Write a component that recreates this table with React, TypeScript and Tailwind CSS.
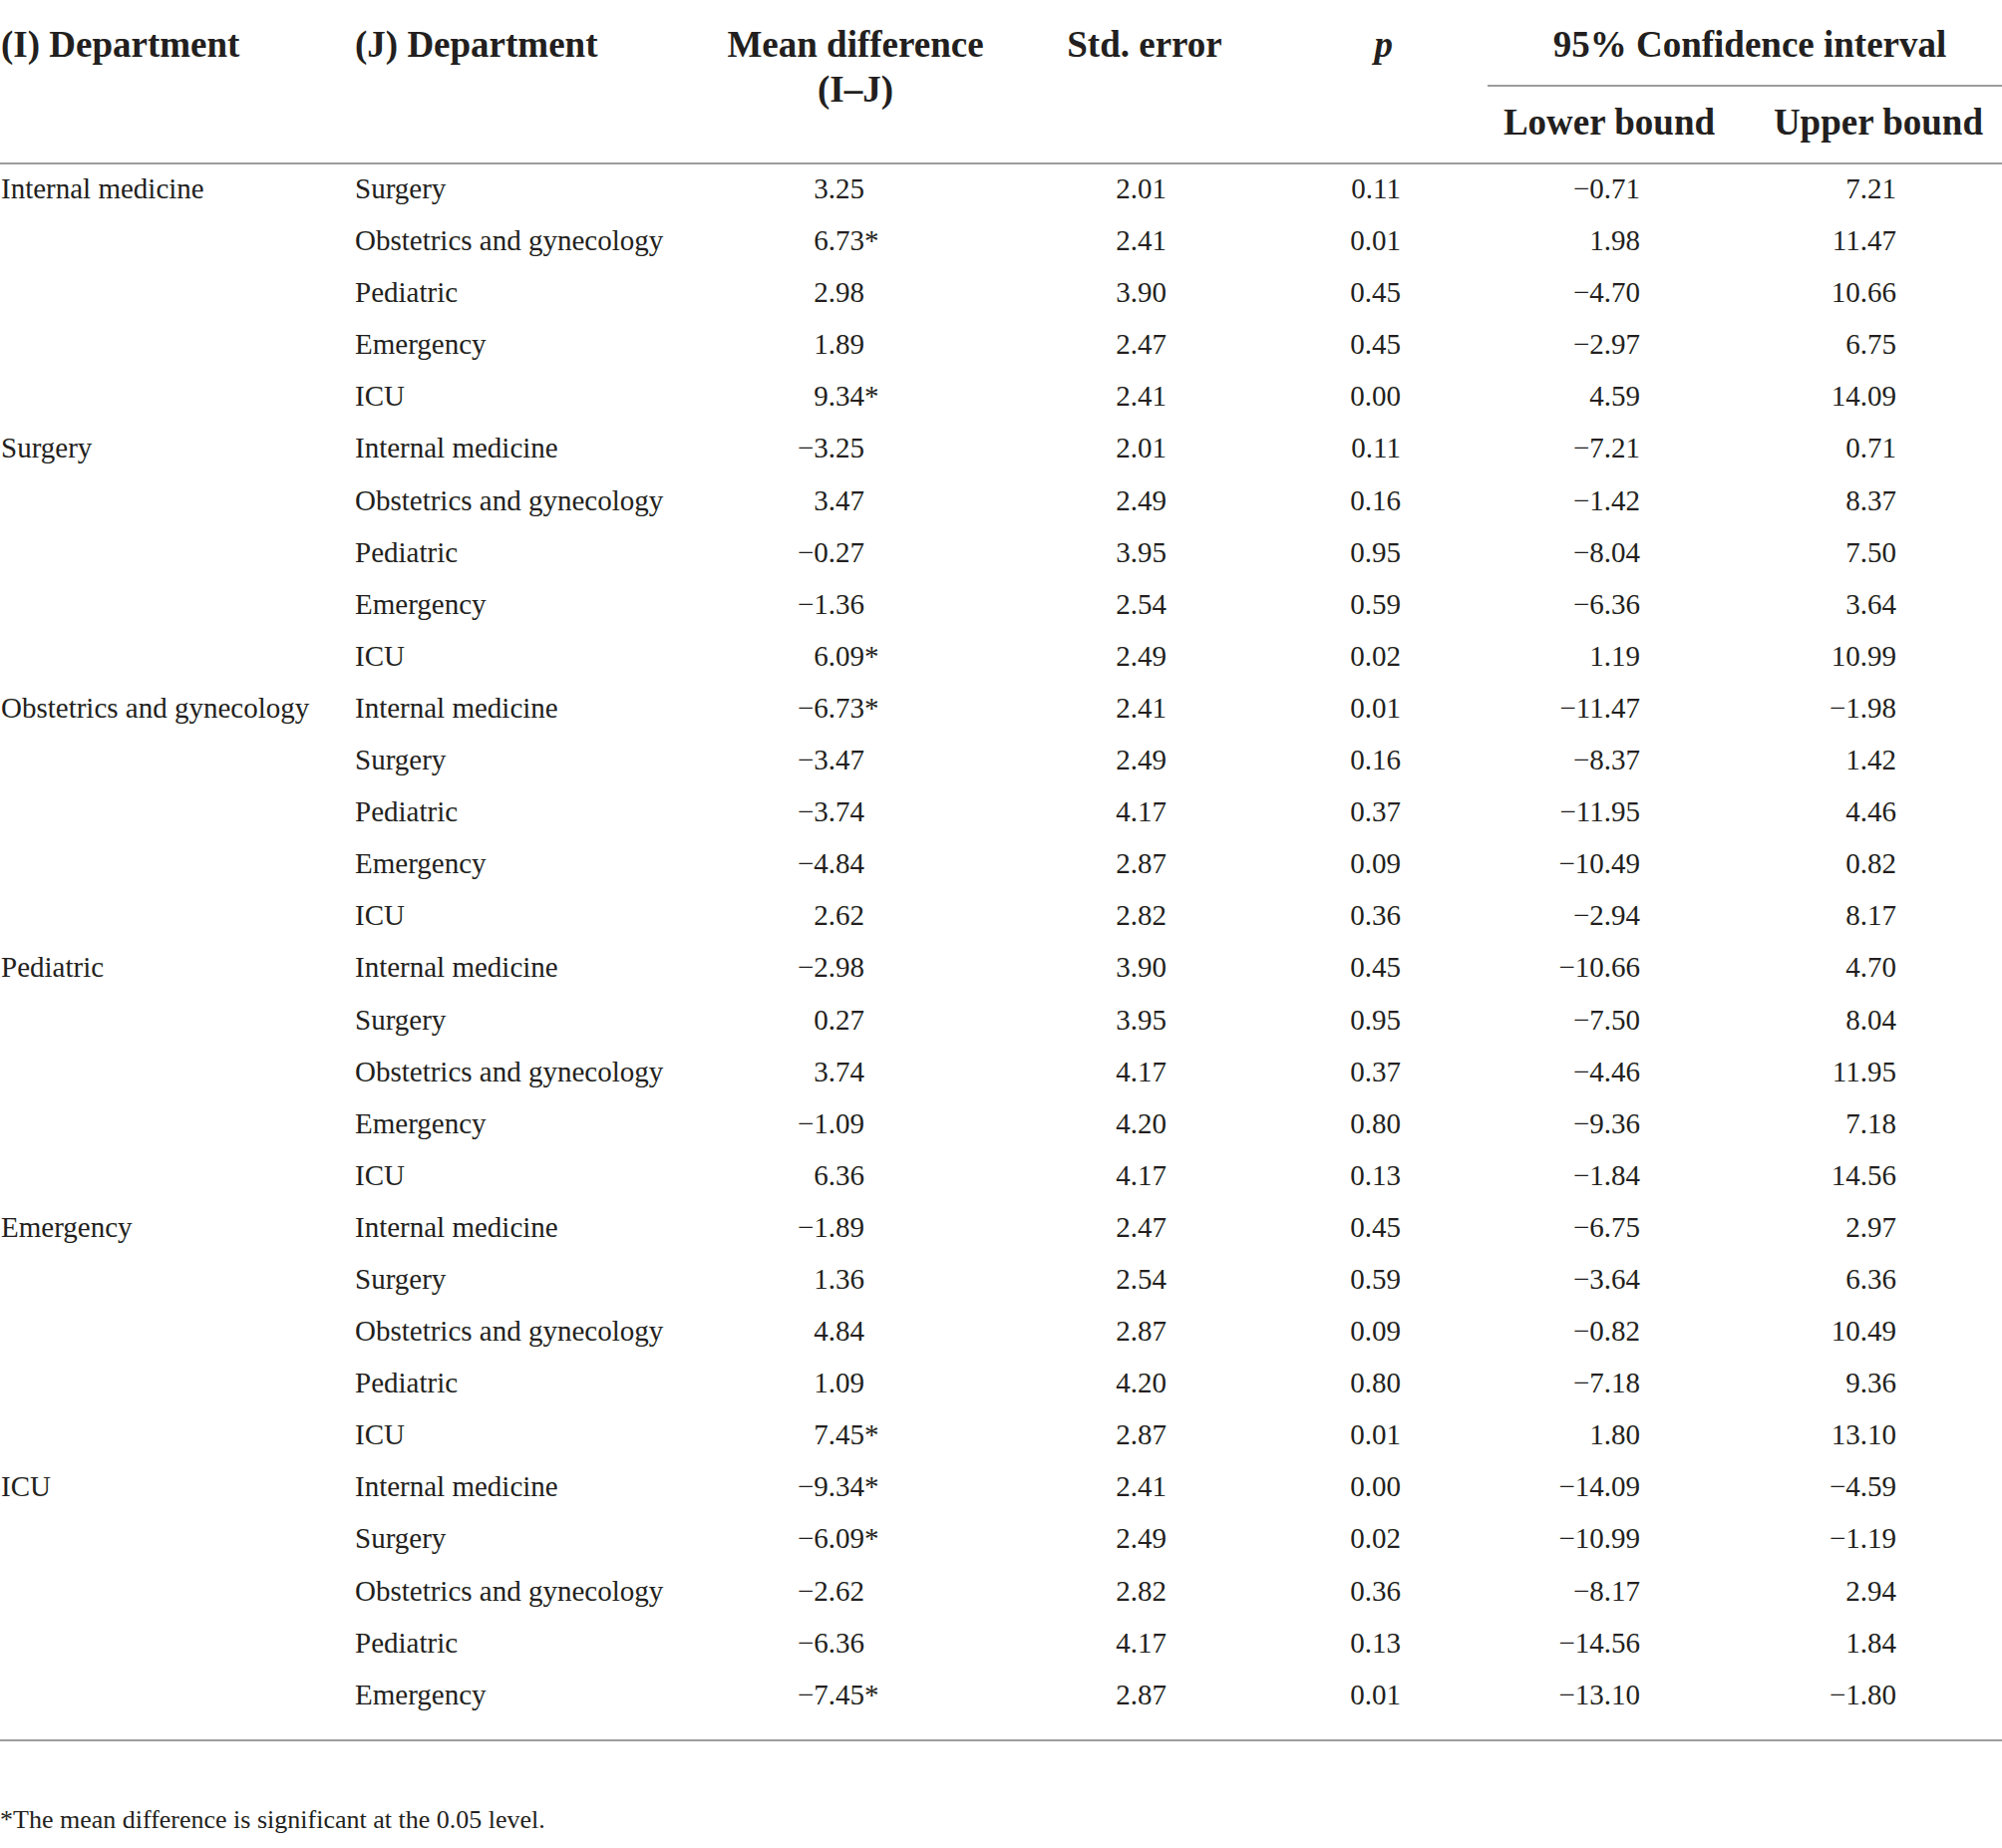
import React from "react";

type Row = [string, string, string, string, string, string];

const groups: { name: string; rows: Row[] }[] = [
  {
    name: "Internal medicine",
    rows: [
      ["Surgery", "3.25", "2.01", "0.11", "−0.71", "7.21"],
      ["Obstetrics and gynecology", "6.73*", "2.41", "0.01", "1.98", "11.47"],
      ["Pediatric", "2.98", "3.90", "0.45", "−4.70", "10.66"],
      ["Emergency", "1.89", "2.47", "0.45", "−2.97", "6.75"],
      ["ICU", "9.34*", "2.41", "0.00", "4.59", "14.09"],
    ],
  },
  {
    name: "Surgery",
    rows: [
      ["Internal medicine", "−3.25", "2.01", "0.11", "−7.21", "0.71"],
      ["Obstetrics and gynecology", "3.47", "2.49", "0.16", "−1.42", "8.37"],
      ["Pediatric", "−0.27", "3.95", "0.95", "−8.04", "7.50"],
      ["Emergency", "−1.36", "2.54", "0.59", "−6.36", "3.64"],
      ["ICU", "6.09*", "2.49", "0.02", "1.19", "10.99"],
    ],
  },
  {
    name: "Obstetrics and gynecology",
    rows: [
      ["Internal medicine", "−6.73*", "2.41", "0.01", "−11.47", "−1.98"],
      ["Surgery", "−3.47", "2.49", "0.16", "−8.37", "1.42"],
      ["Pediatric", "−3.74", "4.17", "0.37", "−11.95", "4.46"],
      ["Emergency", "−4.84", "2.87", "0.09", "−10.49", "0.82"],
      ["ICU", "2.62", "2.82", "0.36", "−2.94", "8.17"],
    ],
  },
  {
    name: "Pediatric",
    rows: [
      ["Internal medicine", "−2.98", "3.90", "0.45", "−10.66", "4.70"],
      ["Surgery", "0.27", "3.95", "0.95", "−7.50", "8.04"],
      ["Obstetrics and gynecology", "3.74", "4.17", "0.37", "−4.46", "11.95"],
      ["Emergency", "−1.09", "4.20", "0.80", "−9.36", "7.18"],
      ["ICU", "6.36", "4.17", "0.13", "−1.84", "14.56"],
    ],
  },
  {
    name: "Emergency",
    rows: [
      ["Internal medicine", "−1.89", "2.47", "0.45", "−6.75", "2.97"],
      ["Surgery", "1.36", "2.54", "0.59", "−3.64", "6.36"],
      ["Obstetrics and gynecology", "4.84", "2.87", "0.09", "−0.82", "10.49"],
      ["Pediatric", "1.09", "4.20", "0.80", "−7.18", "9.36"],
      ["ICU", "7.45*", "2.87", "0.01", "1.80", "13.10"],
    ],
  },
  {
    name: "ICU",
    rows: [
      ["Internal medicine", "−9.34*", "2.41", "0.00", "−14.09", "−4.59"],
      ["Surgery", "−6.09*", "2.49", "0.02", "−10.99", "−1.19"],
      ["Obstetrics and gynecology", "−2.62", "2.82", "0.36", "−8.17", "2.94"],
      ["Pediatric", "−6.36", "4.17", "0.13", "−14.56", "1.84"],
      ["Emergency", "−7.45*", "2.87", "0.01", "−13.10", "−1.80"],
    ],
  },
];

const cols = "grid grid-cols-[355px_400px_206px_374px_157px_244px_272px]";

function Mean({ v }: { v: string }) {
  const star = v.endsWith("*");
  const num = star ? v.slice(0, -1) : v;
  return (
    <div className="text-right pr-[80px]">
      {num}
      <span className="inline-block w-[14px] text-left">{star ? "*" : ""}</span>
    </div>
  );
}

export default function App() {
  return (
    <div
      className="w-[2008px] min-h-[1854px] bg-white text-[#231f20]"
      style={{ fontFamily: '"Liberation Serif", "Times New Roman", serif' }}
    >
      {/* Header */}
      <div className={`${cols} grid-rows-[87px_77px] border-b-2 border-[#9c9c9c] text-[37px] leading-[41px] font-bold h-[165px]`}>
        <div className="row-span-2 pt-[24px] pl-[1px] whitespace-nowrap">(I) Department</div>
        <div className="row-span-2 pt-[24px] pl-[1px] whitespace-nowrap">(J) Department</div>
        <div className="row-span-2 pt-[24px] flex flex-col items-center whitespace-nowrap">
          <span>Mean difference</span>
          <span className="mt-[4px]">(I–J)</span>
        </div>
        <div className="row-span-2 pt-[24px] flex justify-center whitespace-nowrap">Std. error</div>
        <div className="row-span-2 pt-[24px] text-right pr-[95px] italic">p</div>
        <div className="col-span-2 pt-[24px] text-center border-b-2 border-[#9c9c9c] pl-[10px] whitespace-nowrap">
          95% Confidence interval
        </div>
        <div className="pt-[15px] text-center whitespace-nowrap">Lower bound</div>
        <div className="pt-[15px] text-right pr-[19px] whitespace-nowrap">Upper bound</div>
      </div>

      {/* Body */}
      <div className="text-[29px] pb-[17px] border-b-2 border-[#9c9c9c]">
        {groups.map((g) =>
          g.rows.map((r, i) => (
            <div key={g.name + r[0]} className={`${cols} h-[52.1px] leading-[48px]`}>
              <div className="pl-[1px] whitespace-nowrap">{i === 0 ? g.name : ""}</div>
              <div className="pl-[1px] whitespace-nowrap">{r[0]}</div>
              <Mean v={r[1]} />
              <div className="text-right pr-[165px]">{r[2]}</div>
              <div className="text-right pr-[87px]">{r[3]}</div>
              <div className="text-right pr-[91px]">{r[4]}</div>
              <div className="text-right pr-[106px]">{r[5]}</div>
            </div>
          ))
        )}
      </div>

      {/* Footnote */}
      <div className="mt-[64px] text-[26px] leading-[29px]">
        *The mean difference is significant at the 0.05 level.
      </div>
    </div>
  );
}
